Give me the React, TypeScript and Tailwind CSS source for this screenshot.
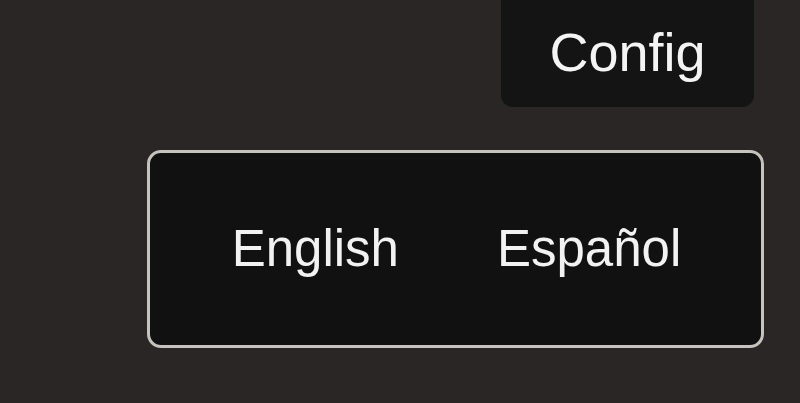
const languages = ["English", "Español"];

export default function App() {
  return (
    <div
      className="w-full h-[403px] bg-[#2a2625] flex flex-col items-end pr-[36px] overflow-hidden"
      style={{ fontFamily: '"Liberation Sans", Arial, sans-serif' }}
    >
      <button className="mr-[10px] w-[253px] h-[107px] rounded-b-[12px] bg-[#151414] text-[#f4f4f4] text-[54px] leading-none flex items-center justify-center pb-[4px]">
        Config
      </button>

      <div className="mt-[43px] w-[617px] h-[198px] rounded-[14px] border-[3px] border-[#c6c2be] bg-[#121111] flex items-center justify-center gap-[98px] pl-[2px] pb-[2px]">
        {languages.map((lang) => (
          <span key={lang} className="text-[51px] leading-none text-[#f2f2f2]">
            {lang}
          </span>
        ))}
      </div>
    </div>
  );
}
